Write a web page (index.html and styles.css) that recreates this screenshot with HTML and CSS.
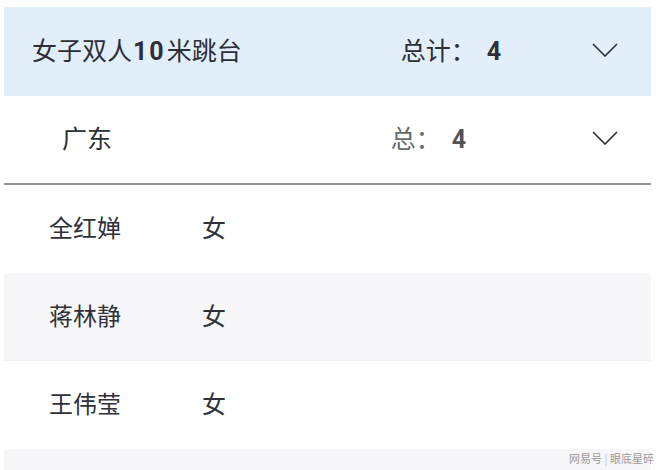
FILE: index.html
```html
<!DOCTYPE html>
<html lang="zh">
<head>
<meta charset="utf-8">
<link rel="stylesheet" href="styles.css">
</head>
<body>
<div class="panel">
  <div class="event">
    <span class="event-title">女子双人<b class="num title-num">10</b>米跳台</span>
    <span class="event-total">总计：<b class="num total-num">4</b></span>
    <svg class="chev" width="26" height="14" viewBox="0 0 26 14"><path d="M1 1 L13 13 L25 1" fill="none" stroke="#2b2f36" stroke-width="1.6"/></svg>
  </div>
  <div class="team">
    <span class="team-name">广东</span>
    <span class="team-total">总：<b class="num total-num">4</b></span>
    <svg class="chev" width="26" height="14" viewBox="0 0 26 14"><path d="M1 1 L13 13 L25 1" fill="none" stroke="#2b2f36" stroke-width="1.6"/></svg>
  </div>
  <div class="row"><span class="name">全红婵</span><span class="sex">女</span></div>
  <div class="row alt"><span class="name">蒋林静</span><span class="sex">女</span></div>
  <div class="row"><span class="name">王伟莹</span><span class="sex">女</span></div>
  <div class="row alt short"></div>
</div>
<div class="mark">网易号 <span class="sep">|</span> 眼底星碎</div>
</body>
</html>
```
FILE: styles.css
```css
html, body {
  margin: 0;
  padding: 0;
  background: #ffffff;
  width: 660px;
  height: 470px;
  overflow: hidden;
  font-family: "Noto Sans CJK SC", "Noto Sans", sans-serif;
  color: #2e3238;
}
.panel {
  margin-left: 4px;
  padding-top: 7px;
  width: 647px;
}
.num {
  font-family: Roboto, "Noto Sans", sans-serif;
  font-weight: 700;
}
.title-num {
  letter-spacing: 2px;
  margin: 0 1px 0 1px;
}
.total-num {
  margin-left: 11px;
}
.event {
  display: flex;
  align-items: center;
  height: 83px;
  padding: 0 33px 6px 28px;
  background: #e3eefb;
  font-size: 25px;
}
.event .chev { margin-top: 2px; }
.event-title {
  flex: 1;
  color: #2b2f36;
}
.event-total {
  color: #2b2f36;
  margin-right: 91px;
}
.team {
  display: flex;
  align-items: center;
  height: 82px;
  padding: 0 33px 5px 58px;
  font-size: 25px;
  border-bottom: 2px solid #8f9595;
}
.team .chev { margin-top: 1px; }
.team-name {
  flex: 1;
  color: #2b2f36;
}
.team-total {
  color: #66696e;
  margin-right: 126px;
}
.team-total .num { color: #505459; }
.chev { display: block; flex: none; }
.row {
  display: flex;
  align-items: center;
  height: 83px;
  padding: 0 0 5px 45px;
  font-size: 24px;
  color: #2e3238;
}
.row.alt { background: #f7f6f9; border-bottom: 1px solid #eeedf0; height: 82px; }
.row.short { height: 30px; padding: 0; border-bottom: none; }
.name { width: 153px; }
.mark {
  position: absolute;
  right: 6px;
  bottom: 4px;
  font-size: 11px;
  color: #9a9a9e;
}
.mark .sep { color: #c4c4c8; }
```
